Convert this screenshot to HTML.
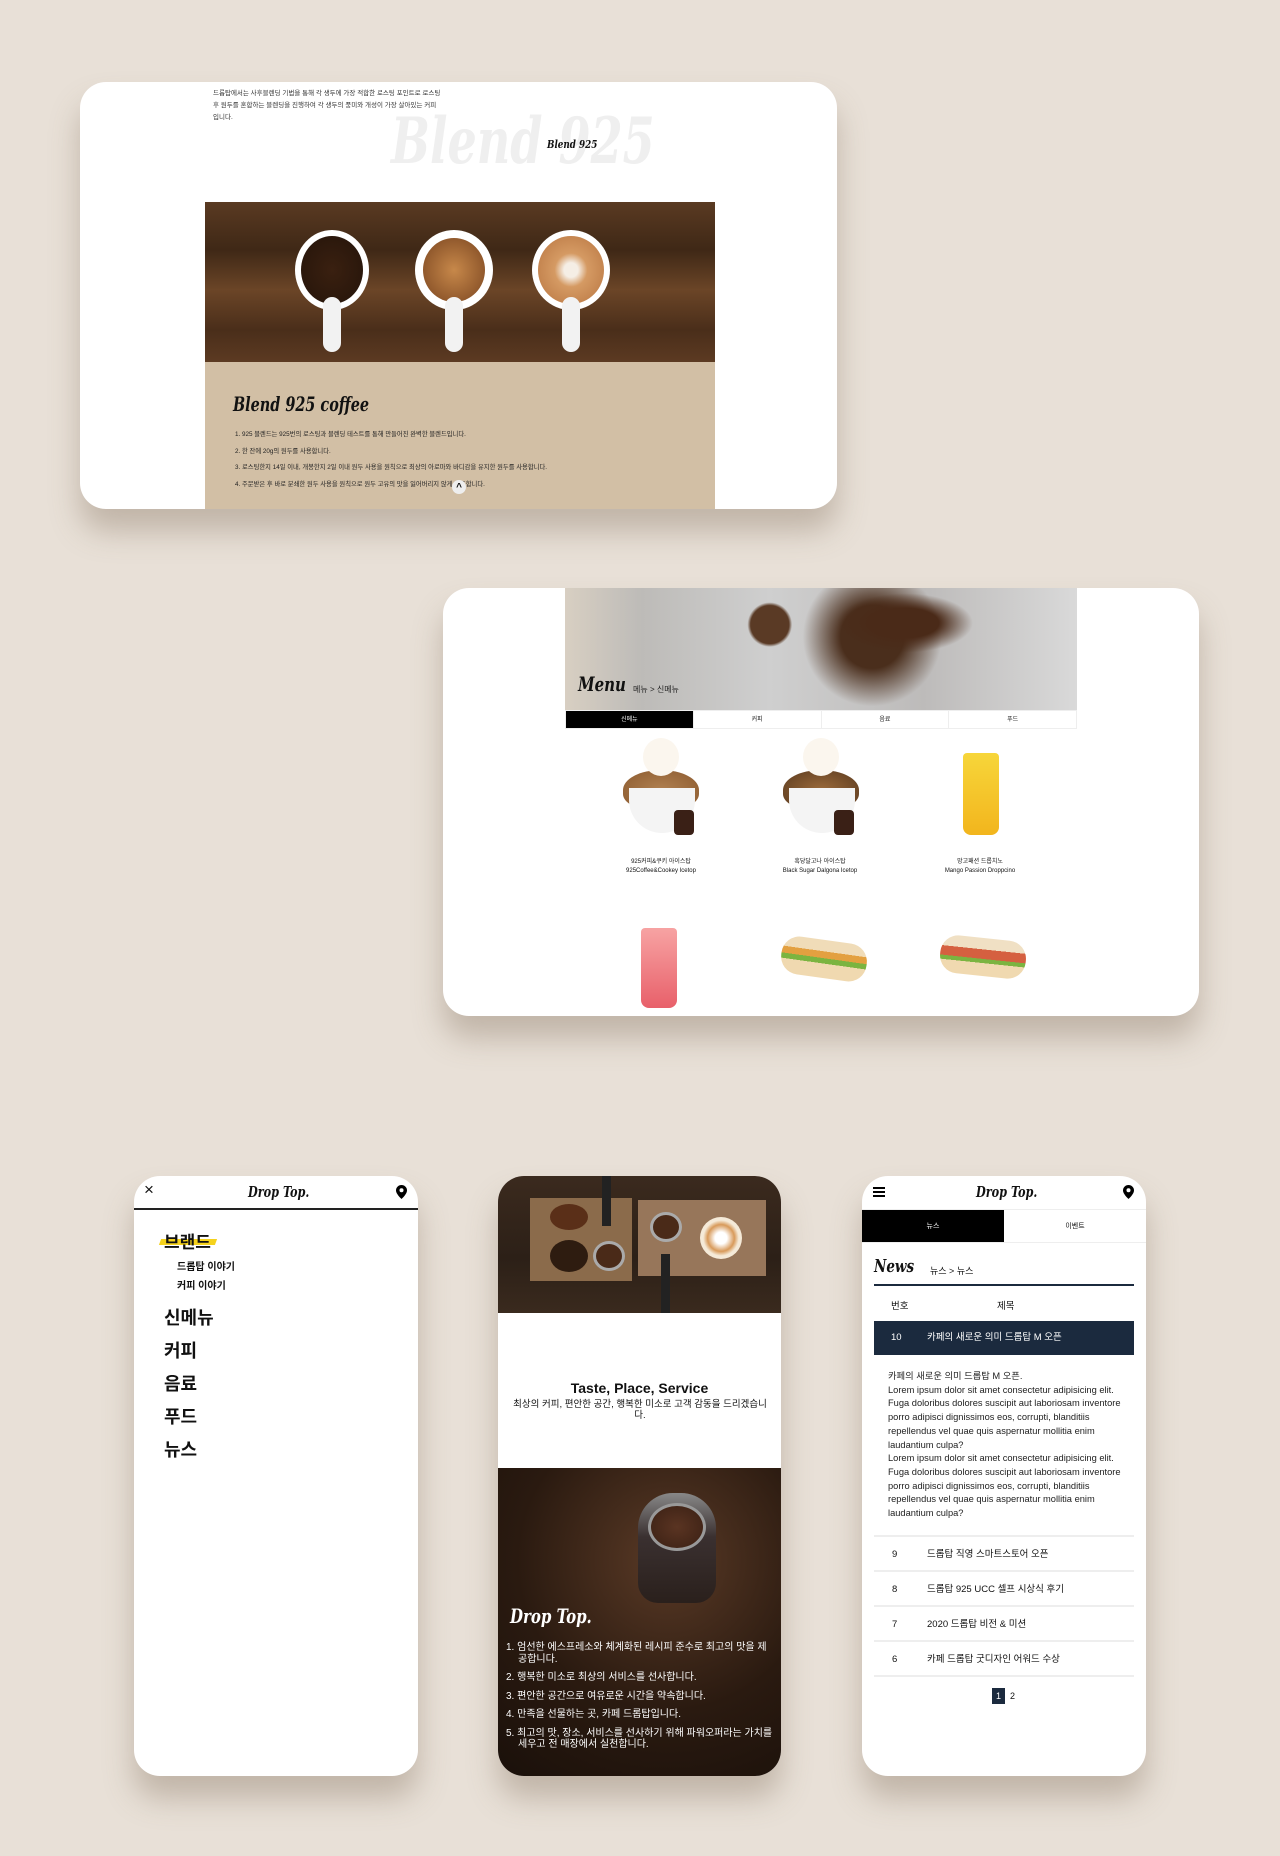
<!DOCTYPE html>
<html><head><meta charset="utf-8"><style>
*{margin:0;padding:0;box-sizing:border-box}
body{width:1280px;height:1856px;background:#e8e0d7;position:relative;overflow:hidden;font-family:"Liberation Sans","Noto Sans CJK KR",sans-serif;color:#111}
.abs{position:absolute}
.card{position:absolute;background:#fff;border-radius:26px;overflow:hidden;box-shadow:0 22px 30px rgba(120,100,80,.35)}
.cur{font-family:"DejaVu Serif","Liberation Serif",serif;font-style:italic;font-weight:bold;transform-origin:0 0}
</style></head><body>

<!-- card 1 -->
<div class="card" style="left:80px;top:82px;width:757px;height:427px">
 <div class="abs" style="left:133px;top:6px;width:228px;font-size:6.5px;line-height:12px;color:#333">드롭탑에서는 사후블렌딩 기법을 통해 각 생두에 가장 적합한 로스팅 포인트로 로스팅 후 원두를 혼합하는 블렌딩을 진행하여 각 생두의 풍미와 개성이 가장 살아있는 커피입니다.</div>
 <div class="abs cur" style="left:311px;top:22px;font-size:64px;color:#efefef;transform:scaleX(.72)">Blend 925</div>
 <div class="abs cur" style="left:467px;top:56px;font-size:11px;color:#111;transform:scaleX(.8)">Blend 925</div>
 <div class="abs" style="left:125px;top:120px;width:510px;height:160px;background:linear-gradient(180deg,#5a3a22,#3f2816 30%,#6b4527 55%,#4a2e1a 80%,#5c3a22)">
  <div class="abs" style="left:90px;top:28px;width:74px;height:80px;border-radius:50%;background:#fff"></div>
  <div class="abs" style="left:96px;top:34px;width:62px;height:68px;border-radius:50%;background:radial-gradient(#3a2010,#24140a)"></div>
  <div class="abs" style="left:118px;top:95px;width:18px;height:55px;border-radius:9px;background:#f2f2f2"></div>
  <div class="abs" style="left:210px;top:28px;width:78px;height:80px;border-radius:50%;background:#fff"></div>
  <div class="abs" style="left:218px;top:36px;width:62px;height:64px;border-radius:50%;background:radial-gradient(#c7884a,#7a4520)"></div>
  <div class="abs" style="left:240px;top:95px;width:18px;height:55px;border-radius:9px;background:#f2f2f2"></div>
  <div class="abs" style="left:327px;top:28px;width:78px;height:80px;border-radius:50%;background:#fff"></div>
  <div class="abs" style="left:333px;top:34px;width:66px;height:68px;border-radius:50%;background:radial-gradient(#f5eee5 15%,#d59a63 35%,#b77440)"></div>
  <div class="abs" style="left:357px;top:95px;width:18px;height:55px;border-radius:9px;background:#f2f2f2"></div>
 </div>
 <div class="abs" style="left:125px;top:280px;width:510px;height:147px;background:#d2bfa5">
  <div class="abs cur" style="left:28px;top:30px;font-size:20px;color:#111;transform:scaleX(.72)">Blend 925 coffee</div>
  <div class="abs" style="left:30px;top:65px;font-size:6.3px;line-height:16.5px;color:#222">1. 925 블렌드는 925번의 로스팅과 블렌딩 테스트를 통해 만들어진 완벽한 블렌드입니다.<br>2. 한 잔에 20g의 원두를 사용합니다.<br>3. 로스팅한지 14일 이내, 개봉한지 2일 이내 원두 사용을 원칙으로 최상의 아로마와 바디감을 유지한 원두를 사용합니다.<br>4. 주문받은 후 바로 분쇄한 원두 사용을 원칙으로 원두 고유의 맛을 잃어버리지 않게 제조합니다.</div>
  <div class="abs" style="left:247px;top:118px;width:14px;height:14px;border-radius:50%;background:#eee;font-size:10px;text-align:center;line-height:15px;font-weight:bold">^</div>
 </div>
</div>

<!-- card 2 -->
<div class="card" style="left:443px;top:588px;width:756px;height:428px">
 <div class="abs" style="left:122px;top:0;width:512px;height:122px;background:radial-gradient(circle at 40% 30%,#5a3a25 0 6%,transparent 7%),radial-gradient(circle at 60% 40%,#4a2e1c 0 10%,transparent 22%),linear-gradient(90deg,#d8cfc2 0,#bdbbb8 15%,#cfcfcf 40%,#bdbbba 70%,#d9d9d9 100%)">
  <div class="abs" style="left:260px;top:0;width:160px;height:70px;background:radial-gradient(ellipse,#4a2a18 0 30%,transparent 60%)"></div>
  <div class="abs cur" style="left:13px;top:84px;font-size:20px;color:#111;transform:scaleX(.75)">Menu</div>
  <div class="abs" style="left:68px;top:96px;font-size:8px;color:#222">메뉴 &gt; 신메뉴</div>
 </div>
 <div class="abs" style="left:122px;top:122px;width:512px;height:19px;border:1px solid #eee;display:flex;font-size:6px;text-align:center;line-height:18px">
  <div style="flex:1;background:#000;color:#fff">신메뉴</div><div style="flex:1;border-left:1px solid #eee">커피</div><div style="flex:1;border-left:1px solid #eee">음료</div><div style="flex:1;border-left:1px solid #eee">푸드</div>
 </div>
 <div class="abs" style="left:180px;top:182px;width:76px;height:40px;border-radius:50% 50% 40% 40%;background:radial-gradient(#b08050,#8b5a2f)"></div>
 <div class="abs" style="left:186px;top:200px;width:66px;height:45px;border-radius:0 0 35px 35px;background:#f4f4f4"></div>
 <div class="abs" style="left:200px;top:150px;width:36px;height:38px;border-radius:50%;background:#fbf6ee"></div>
 <div class="abs" style="left:231px;top:222px;width:20px;height:25px;border-radius:4px;background:#3a2016"></div>
 <div class="abs" style="left:340px;top:182px;width:76px;height:40px;border-radius:50% 50% 40% 40%;background:radial-gradient(#9b6a3a,#5a3a1f)"></div>
 <div class="abs" style="left:346px;top:200px;width:66px;height:45px;border-radius:0 0 35px 35px;background:#f4f4f4"></div>
 <div class="abs" style="left:360px;top:150px;width:36px;height:38px;border-radius:50%;background:#fbf6ee"></div>
 <div class="abs" style="left:391px;top:222px;width:20px;height:25px;border-radius:4px;background:#3a2016"></div>
 <div class="abs" style="left:520px;top:165px;width:36px;height:82px;border-radius:4px 4px 8px 8px;background:linear-gradient(#f7d63a,#f2b51d)"></div>
 <div class="abs" style="left:118px;top:270px;width:200px;text-align:center;font-size:6px;line-height:8.5px">925커피&amp;쿠키 아이스탑<br>925Coffee&amp;Cookey Icetop</div>
 <div class="abs" style="left:277px;top:270px;width:200px;text-align:center;font-size:6px;line-height:8.5px">흑당달고나 아이스탑<br>Black Sugar Dalgona Icetop</div>
 <div class="abs" style="left:437px;top:270px;width:200px;text-align:center;font-size:6px;line-height:8.5px">망고패션 드롭치노<br>Mango Passion Droppcino</div>
 <div class="abs" style="left:198px;top:340px;width:36px;height:80px;border-radius:4px 4px 8px 8px;background:linear-gradient(#f7a3a3,#e8606a)"></div>
 <div class="abs" style="left:338px;top:352px;width:86px;height:38px;border-radius:18px;background:linear-gradient(#f0dcb8 0 30%,#e3a040 30% 48%,#7bb440 48% 62%,#f0d9b0 62%);transform:rotate(8deg)"></div>
 <div class="abs" style="left:497px;top:350px;width:86px;height:38px;border-radius:18px;background:linear-gradient(#f0e0c4 0 30%,#d56040 30% 55%,#7bb440 55% 66%,#f0d9b0 66%);transform:rotate(6deg)"></div>
</div>

<!-- phone 1 -->
<div class="card" style="left:134px;top:1176px;width:284px;height:600px">
 <div class="abs" style="left:10px;top:4px;font-size:17px">×</div>
 <div class="abs cur" style="left:114px;top:7px;font-size:15px;transform:scaleX(.75)">Drop Top.</div>
 <svg class="abs" style="left:262px;top:9px" width="11" height="14" viewBox="0 0 11 14"><path d="M5.5 0C2.5 0 0 2.4 0 5.4 0 9.2 5.5 14 5.5 14S11 9.2 11 5.4C11 2.4 8.5 0 5.5 0z" fill="#000"/><circle cx="5.5" cy="5.3" r="2" fill="#fff"/></svg>
 <div class="abs" style="left:0;top:32px;width:284px;height:2px;background:#222"></div>
 <div class="abs" style="left:26px;top:63px;width:56px;height:6px;background:#f5d21c;transform:skewX(-20deg)"></div>
 <div class="abs" style="left:30px;top:52px;font-size:17px;font-weight:bold">브랜드</div>
 <div class="abs" style="left:43px;top:82px;font-size:10px;font-weight:bold;line-height:19px">드롭탑 이야기<br>커피 이야기</div>
 <div class="abs" style="left:30px;top:126px;font-size:18px;font-weight:bold;line-height:33px">신메뉴<br>커피<br>음료<br>푸드<br>뉴스</div>
</div>

<!-- phone 2 -->
<div class="card" style="left:498px;top:1176px;width:283px;height:600px">
 <div class="abs" style="left:0;top:0;width:283px;height:137px;background:linear-gradient(180deg,#3b2a1e,#2c2017 60%,#3a2a1e)">
  <div class="abs" style="left:32px;top:22px;width:102px;height:83px;background:#8b6b4b"></div>
  <div class="abs" style="left:140px;top:24px;width:128px;height:76px;background:#97765a"></div>
  <div class="abs" style="left:52px;top:28px;width:38px;height:26px;border-radius:50%;background:#5a2f18"></div>
  <div class="abs" style="left:52px;top:64px;width:38px;height:32px;border-radius:50%;background:#2e1c10"></div>
  <div class="abs" style="left:95px;top:65px;width:32px;height:30px;border-radius:50%;background:#4a2a18;border:3px solid #aaa"></div>
  <div class="abs" style="left:152px;top:36px;width:32px;height:30px;border-radius:50%;background:#4a2a18;border:3px solid #aaa"></div>
  <div class="abs" style="left:202px;top:41px;width:42px;height:42px;border-radius:50%;background:radial-gradient(#fff 20%,#d89a5a 45%,#f5ead8 60%)"></div>
  <div class="abs" style="left:104px;top:0;width:9px;height:50px;background:#222"></div>
  <div class="abs" style="left:163px;top:78px;width:9px;height:59px;background:#222"></div>
 </div>
 <div class="abs" style="left:0;top:204px;width:283px;text-align:center;font-size:14px;font-weight:bold">Taste, Place, Service</div>
 <div class="abs" style="left:12px;top:223px;width:260px;text-align:center;font-size:9.5px;line-height:11px">최상의 커피, 편안한 공간, 행복한 미소로 고객 감동을 드리겠습니다.</div>
 <div class="abs" style="left:0;top:292px;width:283px;height:308px;background:radial-gradient(circle at 60% 30%,#5a3a26,#2a1a10 55%,#1a100a)">
  <div class="abs" style="left:140px;top:25px;width:78px;height:110px;border-radius:35px 35px 20px 20px;background:linear-gradient(#888,#3a3030 40%,#2a201c)"></div>
  <div class="abs" style="left:150px;top:35px;width:58px;height:48px;border-radius:50%;background:radial-gradient(#5a3422,#3a2014);border:3px solid #999"></div>
  <div class="abs cur" style="left:12px;top:136px;font-size:20px;color:#fff;transform:scaleX(.75)">Drop Top.</div>
  <div class="abs" style="left:8px;top:174px;width:268px;font-size:10px;line-height:11.5px;color:#fff">
   <div style="padding-left:12px;text-indent:-12px;margin-bottom:7px">1. 엄선한 에스프레소와 체계화된 레시피 준수로 최고의 맛을 제공합니다.</div>
   <div style="margin-bottom:7px">2. 행복한 미소로 최상의 서비스를 선사합니다.</div>
   <div style="margin-bottom:7px">3. 편안한 공간으로 여유로운 시간을 약속합니다.</div>
   <div style="margin-bottom:7px">4. 만족을 선물하는 곳, 카페 드롭탑입니다.</div>
   <div style="padding-left:12px;text-indent:-12px">5. 최고의 맛, 장소, 서비스를 선사하기 위해 파워오퍼라는 가치를 세우고 전 매장에서 실천합니다.</div>
  </div>
 </div>
</div>

<!-- phone 3 -->
<div class="card" style="left:862px;top:1176px;width:284px;height:600px">
 <div class="abs" style="left:11px;top:11px;width:12px;height:2px;background:#000;box-shadow:0 4px #000,0 8px #000"></div>
 <div class="abs cur" style="left:114px;top:7px;font-size:15px;transform:scaleX(.75)">Drop Top.</div>
 <svg class="abs" style="left:261px;top:9px" width="11" height="14" viewBox="0 0 11 14"><path d="M5.5 0C2.5 0 0 2.4 0 5.4 0 9.2 5.5 14 5.5 14S11 9.2 11 5.4C11 2.4 8.5 0 5.5 0z" fill="#000"/><circle cx="5.5" cy="5.3" r="2" fill="#fff"/></svg>
 <div class="abs" style="left:0;top:33px;width:284px;height:34px;display:flex;font-size:7px;text-align:center;line-height:33px;border-bottom:1px solid #eee;border-top:1px solid #eee">
  <div style="flex:1;background:#000;color:#fff">뉴스</div><div style="flex:1">이벤트</div>
 </div>
 <div class="abs cur" style="left:12px;top:80px;font-size:18px;transform:scaleX(.75)">News</div>
 <div class="abs" style="left:68px;top:88px;font-size:9px">뉴스 &gt; 뉴스</div>
 <div class="abs" style="left:12px;top:108px;width:260px;height:2px;background:#1b2a3e"></div>
 <div class="abs" style="left:29px;top:122px;font-size:9.5px">번호</div>
 <div class="abs" style="left:135px;top:122px;font-size:9.5px">제목</div>
 <div class="abs" style="left:12px;top:145px;width:260px;height:34px;background:#1b2a3e;color:#fff;font-size:9.5px;line-height:34px"><span style="position:absolute;left:17px">10</span><span style="position:absolute;left:53px">카페의 새로운 의미 드롭탑 M 오픈</span></div>
 <div class="abs" style="left:26px;top:194px;width:236px;font-size:9.3px;line-height:13.7px;color:#222">카페의 새로운 의미 드롭탑 M 오픈.<br>Lorem ipsum dolor sit amet consectetur adipisicing elit. Fuga doloribus dolores suscipit aut laboriosam inventore porro adipisci dignissimos eos, corrupti, blanditiis repellendus vel quae quis aspernatur mollitia enim laudantium culpa?<br>Lorem ipsum dolor sit amet consectetur adipisicing elit. Fuga doloribus dolores suscipit aut laboriosam inventore porro adipisci dignissimos eos, corrupti, blanditiis repellendus vel quae quis aspernatur mollitia enim laudantium culpa?</div>
 <div class="abs" style="left:12px;top:359px;width:260px;font-size:9.5px">
  <div style="height:35px;line-height:35px;border-top:2px solid #eee;position:relative"><span style="position:absolute;left:18px">9</span><span style="position:absolute;left:53px">드롭탑 직영 스마트스토어 오픈</span></div>
  <div style="height:35px;line-height:35px;border-top:2px solid #eee;position:relative"><span style="position:absolute;left:18px">8</span><span style="position:absolute;left:53px">드롭탑 925 UCC 셀프 시상식 후기</span></div>
  <div style="height:35px;line-height:35px;border-top:2px solid #eee;position:relative"><span style="position:absolute;left:18px">7</span><span style="position:absolute;left:53px">2020 드롭탑 비전 &amp; 미션</span></div>
  <div style="height:37px;line-height:35px;border-top:2px solid #eee;border-bottom:2px solid #eee;position:relative"><span style="position:absolute;left:18px">6</span><span style="position:absolute;left:53px">카페 드롭탑 굿디자인 어워드 수상</span></div>
 </div>
 <div class="abs" style="left:130px;top:512px;width:13px;height:16px;background:#1b2a3e;color:#fff;font-size:9px;text-align:center;line-height:16px">1</div>
 <div class="abs" style="left:148px;top:512px;font-size:9px;line-height:16px">2</div>
</div>
</body></html>
